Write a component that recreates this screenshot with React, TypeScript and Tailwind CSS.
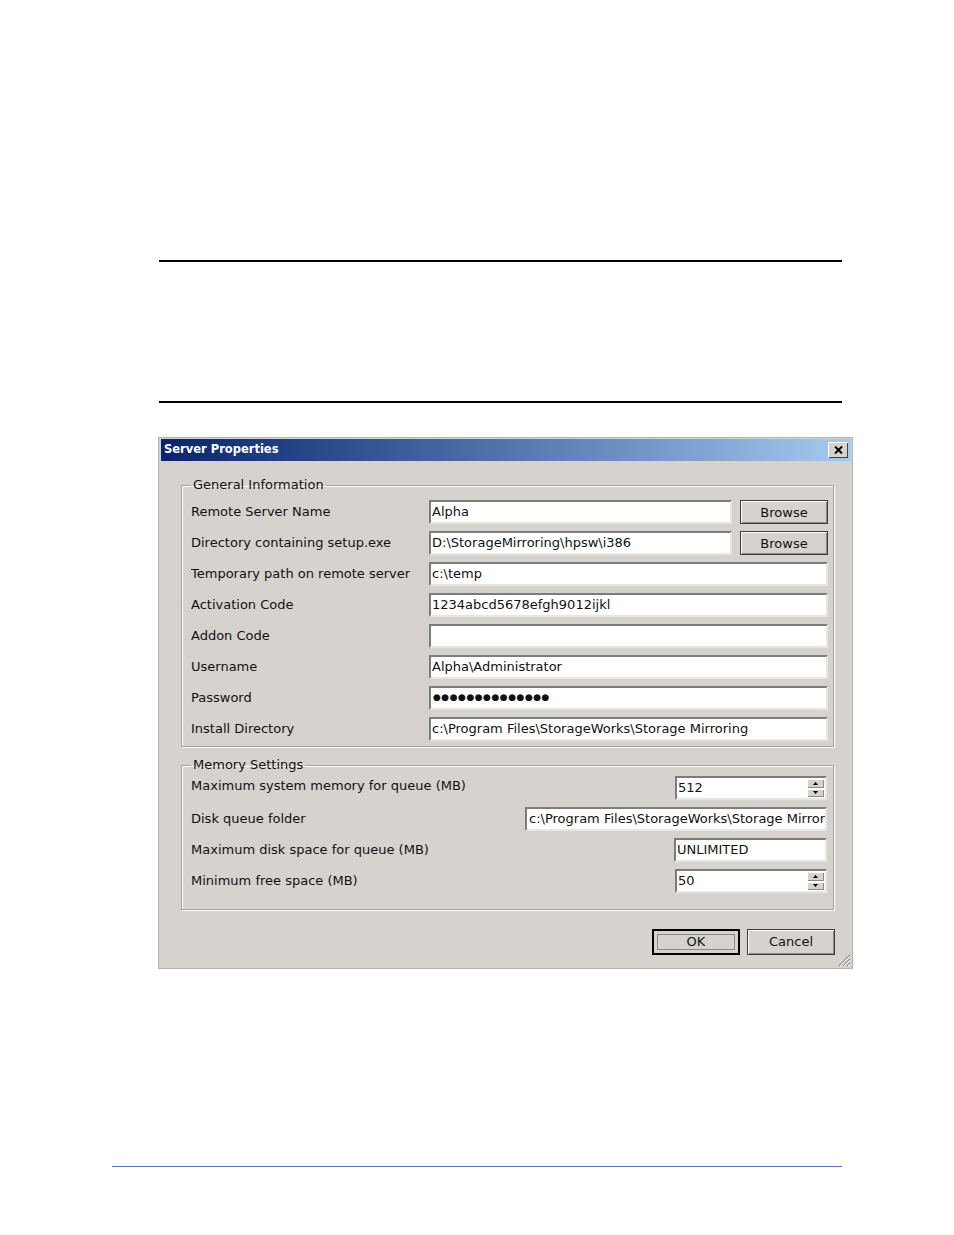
import React from "react";

const sunken =
  "bg-white border-2 border-t-[#7c7c7c] border-l-[#7c7c7c] border-r-[#e8e6e1] border-b-[#e8e6e1]";

function Field({ value, className = "" }: { value?: React.ReactNode; className?: string }) {
  return (
    <div
      className={`h-[24px] flex items-center overflow-hidden whitespace-nowrap pl-[1px] ${sunken} ${className}`}
    >
      {value}
    </div>
  );
}

function Spinner({ value }: { value: string }) {
  return (
    <div className={`w-[152px] h-[24px] flex items-center ${sunken}`}>
      <span className="flex-1 pl-[1px]">{value}</span>
      <div className="w-[18px] h-full flex flex-col gap-px py-px pr-px">
        <div className="flex-1 flex items-center justify-center bg-[#d6d3ce] shadow-[inset_1px_1px_0_#fff,inset_-1px_-1px_0_#8a8a8a]">
          <svg width="5" height="3" viewBox="0 0 5 3">
            <path d="M2.5 0 L5 3 L0 3 Z" fill="#000" />
          </svg>
        </div>
        <div className="flex-1 flex items-center justify-center bg-[#d6d3ce] shadow-[inset_1px_1px_0_#fff,inset_-1px_-1px_0_#8a8a8a]">
          <svg width="5" height="3" viewBox="0 0 5 3">
            <path d="M0 0 L5 0 L2.5 3 Z" fill="#000" />
          </svg>
        </div>
      </div>
    </div>
  );
}

function BrowseButton() {
  return (
    <div className="w-[88px] h-[24px] ml-[8px] shrink-0 flex items-center justify-center pt-[2px] border border-[#3c3c3c] bg-[#d6d3ce] shadow-[inset_1px_1px_0_#fff,inset_-1px_-1px_0_#8a8a8a]">
      Browse
    </div>
  );
}

const general: { label: string; value?: React.ReactNode; browse?: boolean }[] = [
  { label: "Remote Server Name", value: "Alpha", browse: true },
  { label: "Directory containing setup.exe", value: "D:\\StorageMirroring\\hpsw\\i386", browse: true },
  { label: "Temporary path on remote server", value: "c:\\temp" },
  { label: "Activation Code", value: "1234abcd5678efgh9012ijkl" },
  { label: "Addon Code", value: "" },
  { label: "Username", value: "Alpha\\Administrator" },
  {
    label: "Password",
    value: (
      <span className="text-[9px] tracking-[0.5px] pl-[1px]">
        {"●●●●●●●●●●●●●●"}
      </span>
    ),
  },
  { label: "Install Directory", value: "c:\\Program Files\\StorageWorks\\Storage Mirroring" },
];

const groupBox =
  "border border-[#a3a19c] shadow-[1px_1px_0_#fff,inset_1px_1px_0_#fff] m-0";

export default function App() {
  return (
    <div className="w-[954px] h-[1235px] bg-white flex flex-col font-['DejaVu_Sans',sans-serif] text-[13px] text-[#111]">
      {/* page rules */}
      <div className="mt-[260px] ml-[159px] w-[683px] h-[2px] bg-black" />
      <div className="mt-[139px] ml-[159px] w-[683px] h-[2px] bg-black" />

      {/* dialog */}
      <div className="mt-[34px] ml-[158px] w-[695px] h-[532px] relative bg-[#d6d3ce] border border-[#b4b2ad] p-[1px] pl-[2px] flex flex-col">
        <div className="h-[22px] flex items-center justify-between bg-gradient-to-r from-[#0a246a] to-[#a6caf0] pl-[3px] pr-[3px]">
          <span className="text-white font-bold text-[11.5px]">Server Properties</span>
          <div className="w-[20px] h-[16px] flex items-center justify-center bg-[#d6d3ce] shadow-[inset_1px_1px_0_#fff,inset_-1px_-1px_0_#404040]">
            <svg width="9" height="8" viewBox="0 0 9 8">
              <path d="M1 0.5 L8 7.5 M8 0.5 L1 7.5" stroke="#000" strokeWidth="2" />
            </svg>
          </div>
        </div>

        {/* General Information */}
        <fieldset className={`mt-[16px] ml-[20px] w-[653px] pl-[9px] pr-[5px] pt-[7px] pb-[5px] ${groupBox}`}>
          <legend className="px-[2px] leading-[16px]">General Information</legend>
          <div className="flex flex-col gap-[7px]">
            {general.map((row) => (
              <div key={row.label} className="flex items-center h-[24px]">
                <span className="w-[238px] shrink-0 whitespace-nowrap">{row.label}</span>
                <Field value={row.value} className="flex-1" />
                {row.browse && <BrowseButton />}
              </div>
            ))}
          </div>
        </fieldset>

        {/* Memory Settings */}
        <fieldset className={`mt-[10px] ml-[20px] w-[653px] pl-[9px] pr-[6px] pt-[3px] pb-[16px] ${groupBox}`}>
          <legend className="px-[2px] leading-[16px]">Memory Settings</legend>
          <div className="flex flex-col gap-[7px]">
            <div className="flex items-center justify-between h-[24px]">
              <span className="-mt-[4px]">Maximum system memory for queue (MB)</span>
              <Spinner value="512" />
            </div>
            <div className="flex items-center justify-between h-[24px]">
              <span>Disk queue folder</span>
              <Field
                value={<span className="pl-[1px]">c:\Program Files\StorageWorks\Storage Mirroring</span>}
                className="w-[302px]"
              />
            </div>
            <div className="flex items-center justify-between h-[24px]">
              <span>Maximum disk space for queue (MB)</span>
              <Field value="UNLIMITED" className="w-[153px]" />
            </div>
            <div className="flex items-center justify-between h-[24px]">
              <span>Minimum free space (MB)</span>
              <Spinner value="50" />
            </div>
          </div>
        </fieldset>

        {/* buttons */}
        <div className="mt-[19px] ml-[20px] w-[654px] flex justify-end gap-[7px]">
          <div className="w-[88px] h-[26px] border-2 border-black bg-[#d6d3ce] p-[3px]">
            <div className="w-full h-full border border-[#8a8a8a] flex items-center justify-center">
              OK
            </div>
          </div>
          <div className="w-[88px] h-[26px] flex items-center justify-center border border-[#3c3c3c] bg-[#d6d3ce] shadow-[inset_1px_1px_0_#fff,inset_-1px_-1px_0_#8a8a8a]">
            Cancel
          </div>
        </div>

        {/* resize grip */}
        <svg className="absolute right-[1px] bottom-[1px]" width="14" height="14" viewBox="0 0 14 14">
          <path d="M13 2 L2 13 M13 6 L6 13 M13 10 L10 13" stroke="#8a8a8a" strokeWidth="1.2" />
          <path d="M13 3 L3 13 M13 7 L7 13 M13 11 L11 13" stroke="#fff" strokeWidth="1" />
        </svg>
      </div>

      {/* footer rule */}
      <div className="mt-[197px] ml-[112px] w-[730px] h-px bg-[#5573b5]" />
    </div>
  );
}
